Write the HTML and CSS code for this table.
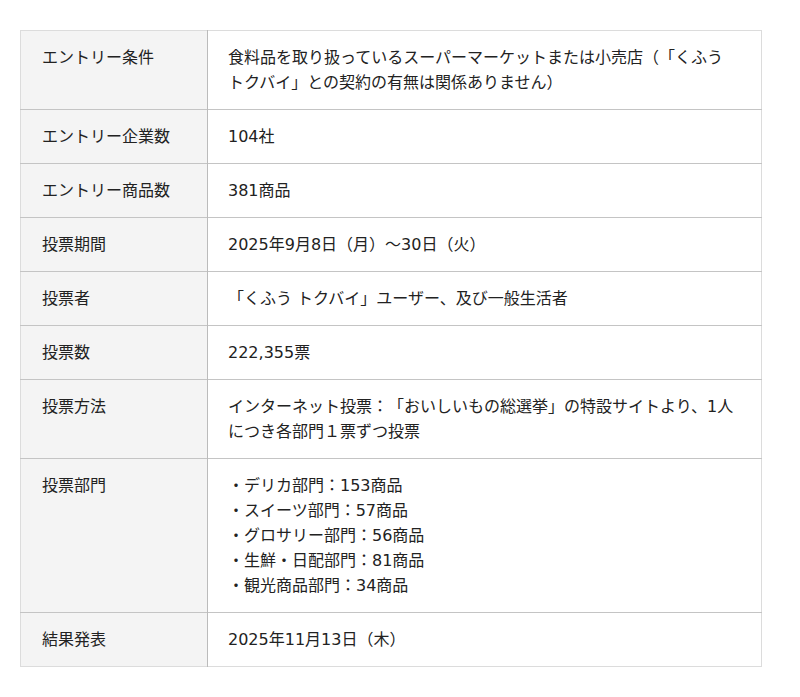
FILE: index.html
```html
<!DOCTYPE html>
<html lang="ja">
<head>
<meta charset="utf-8">
<title>おいしいもの総選挙</title>
<link rel="stylesheet" href="styles.css">
</head>
<body>
<table class="info">
  <tbody>
    <tr><th>エントリー条件</th><td>食料品を取り扱っているスーパーマーケットまたは小売店（「くふう トクバイ」との契約の有無は関係ありません）</td></tr>
    <tr><th>エントリー企業数</th><td>104社</td></tr>
    <tr><th>エントリー商品数</th><td>381商品</td></tr>
    <tr><th>投票期間</th><td>2025年9月8日（月）～30日（火）</td></tr>
    <tr><th>投票者</th><td>「くふう トクバイ」ユーザー、及び一般生活者</td></tr>
    <tr><th>投票数</th><td>222,355票</td></tr>
    <tr><th>投票方法</th><td>インターネット投票：「おいしいもの総選挙」の特設サイトより、1人につき各部門１票ずつ投票</td></tr>
    <tr><th>投票部門</th><td>・デリカ部門：153商品<br>・スイーツ部門：57商品<br>・グロサリー部門：56商品<br>・生鮮・日配部門：81商品<br>・観光商品部門：34商品</td></tr>
    <tr><th>結果発表</th><td>2025年11月13日（木）</td></tr>
  </tbody>
</table>
</body>
</html>
```

FILE: styles.css
```css
html, body {
  margin: 0;
  padding: 0;
  background: #fff;
}
body {
  padding: 30px 20px;
  font-family: "DejaVu Sans", "Noto Sans CJK JP", sans-serif;
  font-size: 16px;
  line-height: 25px;
  color: #222;
  text-spacing-trim: space-all;
}
.info {
  width: 742px;
  border-collapse: collapse;
  border: 1px solid #dcdcdc;
}
.info th,
.info td {
  vertical-align: top;
  text-align: left;
  font-weight: normal;
  padding: 14px 22px 14px 21px;
}
.info th {
  width: 143px;
  background: #f4f4f4;
  border-right: 1px solid #bbbbbb;
}
.info td {
  padding-left: 20px;
  padding-right: 22px;
}
.info tr + tr th,
.info tr + tr td {
  border-top: 1px solid #c4c4c4;
}
```
